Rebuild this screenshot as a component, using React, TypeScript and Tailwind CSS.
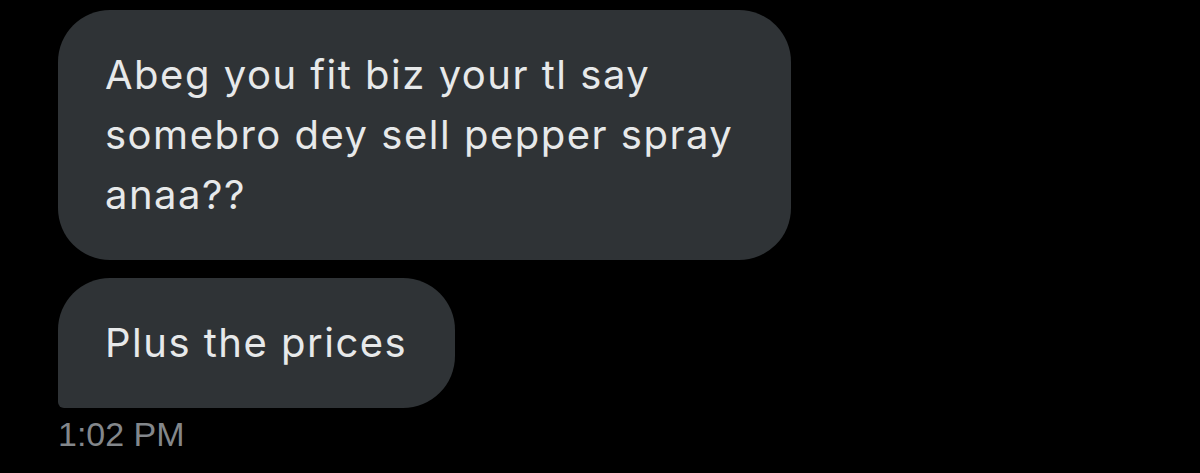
export default function App() {
  return (
    <div className="w-[1200px] h-[473px] bg-black overflow-hidden">
      <div className="flex flex-col items-start pl-[58px] pt-[10px]">
        <div className="bg-[#2f3336] text-[#e7e9ea] rounded-[52px] pl-[47px] pr-[40px] py-[35px] w-[733px] text-[40px] leading-[60px] tracking-[1.5px] font-[Inter,sans-serif]">
          Abeg you fit biz your tl say
          <br />
          somebro dey sell pepper spray
          <br />
          anaa??
        </div>
        <div className="mt-[18px] bg-[#2f3336] text-[#e7e9ea] rounded-[52px] rounded-bl-[6px] pl-[47px] pr-[48px] py-[35px] text-[40px] leading-[60px] tracking-[1.5px] font-[Inter,sans-serif]">
          Plus the prices
        </div>
        <div className="mt-[7px] text-[#83878b] text-[34px] leading-[38px] font-['Liberation_Sans',Arial,sans-serif]">
          1:02 PM
        </div>
      </div>
    </div>
  );
}
